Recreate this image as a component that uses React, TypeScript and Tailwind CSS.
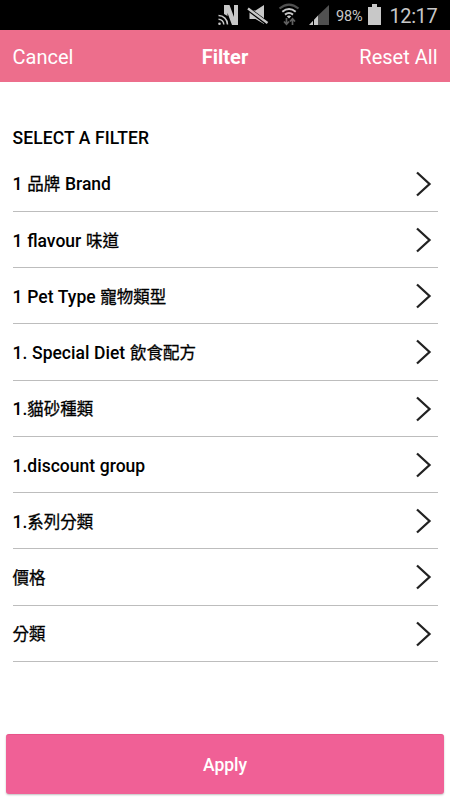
const FILTERS = [
  { id: 'brand', label: '1 品牌 Brand' },
  { id: 'flavour', label: '1 flavour 味道' },
  { id: 'pet-type', label: '1 Pet Type 寵物類型' },
  { id: 'special-diet', label: '1. Special Diet 飲食配方' },
  { id: 'litter', label: '1.貓砂種類' },
  { id: 'discount', label: '1.discount group' },
  { id: 'series', label: '1.系列分類' },
  { id: 'price', label: '價格' },
  { id: 'category', label: '分類' },
]

function StatusBar() {
  return (
    <div className="flex h-[30px] items-center bg-black pl-[217px] text-[#c8c8c8]">
      {/* NFC */}
      <svg className="h-[30px] w-6 shrink-0" viewBox="217 0 24 30" fill="none">
        <path d="M224 14V5h5.500l4.500 12V5h4v20h-6L227.500 13v3z" fill="#c8c8c8" />
        <path d="M218.500 15.500a9 9 0 0 1 9 9M218.500 19.200a5.300 5.300 0 0 1 5.300 5.300" stroke="#c8c8c8" strokeWidth="1.500" />
        <circle cx="219.500" cy="23.700" r="1.300" fill="#c8c8c8" />
      </svg>
      {/* Muted */}
      <svg className="ml-1.5 h-[30px] w-[23px] shrink-0" viewBox="247 0 23 30" fill="none">
        <path d="M249.500 10.500h6l8.500-5.500v19l-8.500-5h-6z" fill="#c8c8c8" />
        <path d="M248 9l19.500 14.500" stroke="#000" strokeWidth="4.200" />
        <path d="M248 8.500l19.500 14.500" stroke="#c8c8c8" strokeWidth="2.300" />
      </svg>
      {/* Wi-Fi */}
      <svg className="ml-2 h-[30px] w-[22px] shrink-0" viewBox="278 0 22 30" fill="none">
        <path d="M279.500 8.500c6-5 13-5 19 0" stroke="#505050" strokeWidth="2.200" />
        <path d="M282.300 11.700c4.500-3.600 9-3.600 13.400 0M285 14.600c2.700-2.200 5.300-2.200 8 0" stroke="#c8c8c8" strokeWidth="2" />
        <path d="M286.800 16.200c1.500-1 2.900-1 4.400 0L289 18.500z" fill="#c8c8c8" />
        <path d="M286.500 18v6M284 21.500l2.500 2.800 2.500-2.800M292.500 25v-6M290 21.500l2.500-2.800 2.500 2.800" stroke="#606060" strokeWidth="1.700" />
      </svg>
      {/* Signal */}
      <svg className="ml-2 h-[30px] w-[22px] shrink-0" viewBox="308 0 22 30">
        <path d="M329 5v20h-11V15.500z" fill="#505050" />
        <path d="M309 25l4-4.200V25zM314 25v-5.200l4-4.200V25z" fill="#c8c8c8" />
      </svg>
      <span className="ml-[6px] w-[32px] pt-[3px] text-[14.500px] tracking-[-0.1px]">98%</span>
      <svg className="h-[30px] w-[13px] shrink-0" viewBox="368 0 13 30">
        <path d="M372 4h5v3h4v18h-13V7h4z" fill="#c8c8c8" />
      </svg>
      <span className="ml-[8.500px] pt-[2px] text-[20px] tracking-[-0.4px]">12:17</span>
    </div>
  )
}

// Chinese runs are set lighter and slightly smaller than the Latin ones
function MixedLabel({ text }: { text: string }) {
  return (
    <span className="pt-[3px] text-[17.500px] font-medium [word-spacing:0.4px]">
      {text.split(/([\u4e00-\u9fff]+)/).map((part, i) =>
        i % 2 === 1 ? (
          <span key={i} className="text-[16.500px] font-normal [-webkit-text-stroke:0.3px_#000]">
            {part}
          </span>
        ) : (
          part
        )
      )}
    </span>
  )
}

function FilterRow({ label }: { label: string }) {
  return (
    <li className="flex h-[56.250px] items-center justify-between border-b border-[#bdbdbd] pr-[6px]">
      <MixedLabel text={label} />
      <svg className="mt-px h-[26px] w-4" viewBox="0 0 16 26" fill="none" stroke="#222" strokeWidth="2.300">
        <path d="M1 1.500L13.500 13L1 24.500" />
      </svg>
    </li>
  )
}

export default function App() {
  return (
    <div className="flex h-[800px] w-[450px] flex-col overflow-hidden bg-white font-['Roboto','Noto_Sans_CJK_TC',sans-serif] text-black">
      <StatusBar />

      <header className="grid h-[52px] grid-cols-3 items-center bg-[#ed6e8c] px-[12.500px] pt-0.5 text-[20px] text-white">
        <button className="text-left">Cancel</button>
        <h1 className="text-center font-bold">Filter</h1>
        <button className="text-right">Reset All</button>
      </header>

      <main className="flex-1 px-[12.500px] pt-[44px]">
        <h2 className="h-[29.500px] text-[17.500px] leading-6 font-medium tracking-[0.1px]">SELECT A FILTER</h2>
        <ul>
          {FILTERS.map((filter) => (
            <FilterRow key={filter.id} label={filter.label} />
          ))}
        </ul>
      </main>

      <footer className="px-1.5 pb-1.5">
        <button className="h-[60px] w-full rounded-[3px] border-t border-[#e8538a] bg-[#f06096] pt-px text-[17.500px] font-medium text-white shadow-[0_1px_2px_rgba(0,0,0,0.25)]">
          Apply
        </button>
      </footer>
    </div>
  )
}
